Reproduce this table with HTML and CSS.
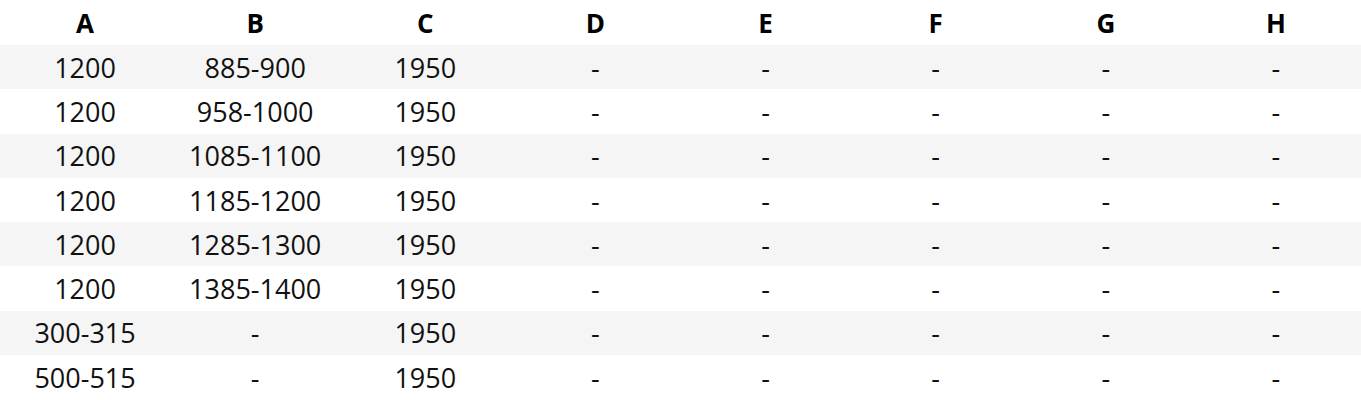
FILE: index.html
```html
<!DOCTYPE html>
<html>
<head>
<meta charset="utf-8">
<link rel="stylesheet" href="styles.css">
</head>
<body>
<table class="spec">
  <thead>
    <tr><th>A</th><th>B</th><th>C</th><th>D</th><th>E</th><th>F</th><th>G</th><th>H</th></tr>
  </thead>
  <tbody>
    <tr><td>1200</td><td>885-900</td><td>1950</td><td>-</td><td>-</td><td>-</td><td>-</td><td>-</td></tr>
    <tr><td>1200</td><td>958-1000</td><td>1950</td><td>-</td><td>-</td><td>-</td><td>-</td><td>-</td></tr>
    <tr><td>1200</td><td>1085-1100</td><td>1950</td><td>-</td><td>-</td><td>-</td><td>-</td><td>-</td></tr>
    <tr><td>1200</td><td>1185-1200</td><td>1950</td><td>-</td><td>-</td><td>-</td><td>-</td><td>-</td></tr>
    <tr><td>1200</td><td>1285-1300</td><td>1950</td><td>-</td><td>-</td><td>-</td><td>-</td><td>-</td></tr>
    <tr><td>1200</td><td>1385-1400</td><td>1950</td><td>-</td><td>-</td><td>-</td><td>-</td><td>-</td></tr>
    <tr><td>300-315</td><td>-</td><td>1950</td><td>-</td><td>-</td><td>-</td><td>-</td><td>-</td></tr>
    <tr><td>500-515</td><td>-</td><td>1950</td><td>-</td><td>-</td><td>-</td><td>-</td><td>-</td></tr>
  </tbody>
</table>
</body>
</html>
```
FILE: styles.css
```css
html, body {
  margin: 0;
  padding: 0;
  background: #ffffff;
}
body {
  font-family: "Open Sans", "DejaVu Sans", sans-serif;
  color: #111111;
}
.spec {
  width: 100%;
  border-collapse: collapse;
  table-layout: fixed;
}
.spec th,
.spec td {
  text-align: center;
  padding: 0;
  vertical-align: middle;
}
.spec th {
  height: 45px;
  font-size: 26px;
  font-weight: 700;
  color: #000000;
}
.spec td {
  height: 44.3px;
  font-size: 27px;
  font-weight: 400;
}
.spec tbody tr:nth-child(odd) {
  background: #f5f5f5;
}
```
